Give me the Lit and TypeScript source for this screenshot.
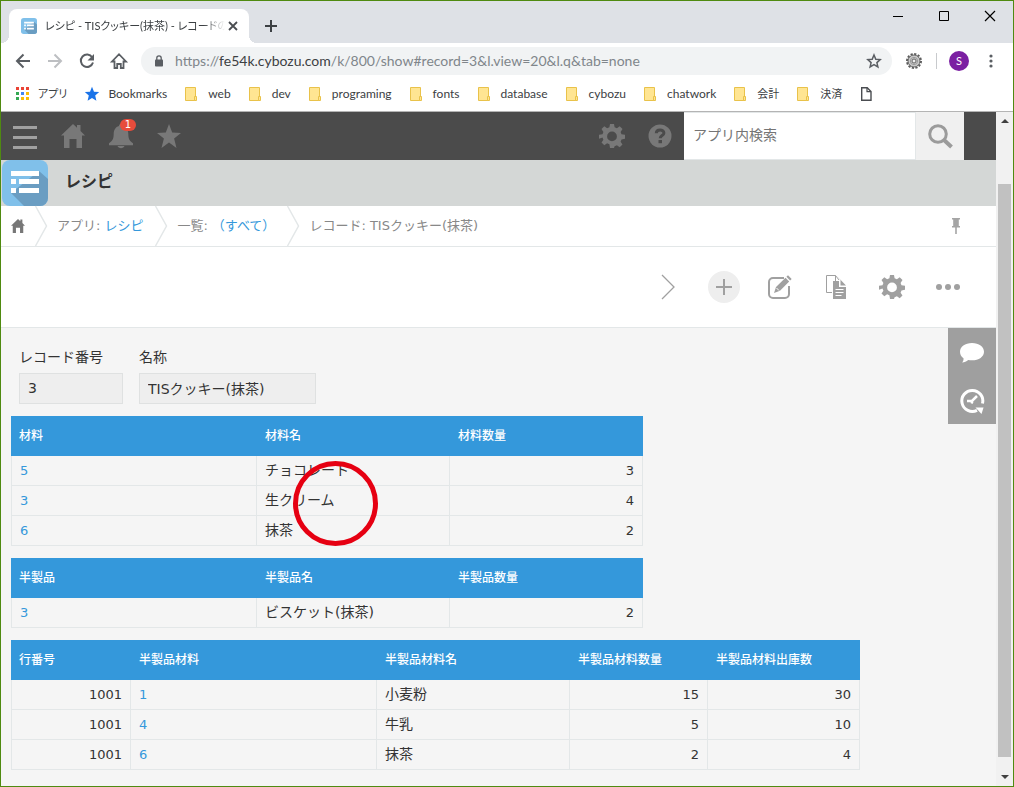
import { LitElement, html, css, svg, nothing } from "lit";
import { customElement, property } from "lit/decorators.js";

const GEAR =
  "M10 0h4l.6 3.3 2.3 1 2.8-2 2.8 2.8-1.9 2.8.9 2.3 3.5.6v4l-3.5.6-.9 2.3 1.9 2.8-2.8 2.8-2.8-2-2.3 1L14 24h-4l-.6-3.7-2.3-1-2.8 2-2.8-2.8 1.9-2.8-.9-2.3L-1 14.800v-4l3.500-.6.9-2.300L1.500 5.100l2.800-2.800 2.800 2 2.300-1z";

const ICONS: Record<string, unknown> = {
  appIcon: svg`<rect width="46" height="46" rx="8" fill="#80c0ea"/><path d="M37 11l9 8v19a8 8 0 0 1-8 8H22L9 33z" fill="#6a9dc2"/><path fill="#fff" d="M9 11h28v5H9zM9 19h5v5H9zM17 19h20v5H17zM9 28h5v5H9zM17 28h20v5H17z"/>`,
  close: svg`<path d="M2 2l8 8M10 2l-8 8" stroke="#4a4d51" stroke-width="1.800" fill="none"/>`,
  plus: svg`<path d="M6 0v12M0 6h12" stroke="#3c4043" stroke-width="2" fill="none"/>`,
  winMin: svg`<path d="M0 5.500h10" stroke="#000" fill="none"/>`,
  winMax: svg`<path d="M.5.5h9v9h-9z" stroke="#000" fill="none"/>`,
  winClose: svg`<path d="M0 0l10 10M10 0L0 10" stroke="#000" stroke-width="1.200" fill="none"/>`,
  back: svg`<path d="M15 8H2.500M8.500 1.500L2 8l6.500 6.500" stroke="#5a5e63" stroke-width="2" fill="none"/>`,
  forward: svg`<path d="M1 8h12.500M7.500 1.500L14 8l-6.500 6.500" stroke="#bdbfc2" stroke-width="2" fill="none"/>`,
  reload: svg`<path d="M13.200 4.200A6.200 6.200 0 1 0 14 9.500" stroke="#5a5e63" stroke-width="2" fill="none"/><path d="M15 1v6.500H8.500z" fill="#5a5e63"/>`,
  navHome: svg`<path d="M3.500 15V8.500H1L8 1.200 15 8.500h-2.500V15H9.800v-4H6.200v4z" stroke="#5a5e63" stroke-width="1.800" fill="none"/>`,
  lock: svg`<rect x="1" y="4.500" width="8" height="7" rx=".8" fill="#5a5e63"/><path d="M2.800 5V3a2.200 2.200 0 0 1 4.400 0v2" stroke="#5a5e63" stroke-width="1.300" fill="none"/>`,
  starOutline: svg`<path d="M7 1l1.800 4.200 4.400.4-3.300 3 1 4.400L7 10.700l-3.900 2.300 1-4.400-3.300-3 4.400-.4z" stroke="#5a5e63" stroke-width="1.500" fill="none"/>`,
  extension: svg`<circle cx="8" cy="8" r="7" fill="none" stroke="#5c5c5c" stroke-width="2" stroke-dasharray="2.200 1.460"/><circle cx="8" cy="8" r="6" fill="#c9c9c9" stroke="#666"/><circle cx="8" cy="8" r="3.600" fill="none" stroke="#999" stroke-width="1"/><circle cx="8" cy="8" r="2" fill="#eee" stroke="#666"/>`,
  kebab: svg`<circle cx="2" cy="2" r="1.600" fill="#5a5e63"/><circle cx="2" cy="7" r="1.600" fill="#5a5e63"/><circle cx="2" cy="12" r="1.600" fill="#5a5e63"/>`,
  apps: svg`<path fill="#ea4335" d="M2 1h3v3H2zM7 1h3v3H7zM12 1h3v3h-3z"/><path fill="#34a853" d="M2 6h3v3H2zM2 11h3v3H2z"/><path fill="#4285f4" d="M7 6h3v3H7z"/><path fill="#fbbc05" d="M12 6h3v3h-3zM7 11h3v3H7zM12 11h3v3h-3z"/>`,
  blueStar: svg`<path fill="#1a73e8" d="M8 .8l2 4.900 5.200.4-4 3.400 1.200 5.200L8 12l-4.400 2.700 1.200-5.200-4-3.400L6 5.700z"/>`,
  folder: svg`<path d="M1.500 1.500h10v13h-10z" fill="#ffe592" stroke="#e9c24a"/><path d="M10.500 10.500h2v4h-2z" fill="#ffe592" stroke="#e9c24a"/>`,
  file: svg`<path d="M2.700 1.700h5.500l3.800 3.800v8.800H2.700z" stroke="#4a4d51" stroke-width="1.400" fill="none"/><path d="M8 1.700v4h4" stroke="#4a4d51" stroke-width="1.200" fill="none"/>`,
  menu: svg`<path fill="#a0a0a0" d="M0 2h24v3H0zM0 12h24v3H0zM0 22h24v3H0z"/>`,
  house: svg`<path fill="currentColor" d="M12 0l4 3.700V1h3.500v6L24 11.500h-3V24h-5.500v-9h-7v9H3V11.500H0z"/>`,
  bell: svg`<path fill="currentColor" d="M12 0c1.300 0 2 .8 2 2 3.600 1 5.300 4 5.300 8 0 5.500 2 7.500 4.700 9.200v2H0v-2C2.700 17.500 4.700 15.500 4.700 10c0-4 1.700-7 5.300-8 0-1.200.7-2 2-2zM8.500 22h7c-.6 1.400-2 2.200-3.500 2.200S9.100 23.400 8.500 22z"/>`,
  star: svg`<path fill="currentColor" d="M12 0l3.200 8.500 8.800.4-6.900 5.700L19.500 24 12 18.500 4.500 24l2.400-9.400L0 8.900l8.800-.4z"/>`,
  gear: svg`<path fill="currentColor" fill-rule="evenodd" d="${GEAR}M12 7.500a4.900 4.900 0 1 0 0 9.800 4.900 4.900 0 0 0 0-9.800z"/>`,
  help: svg`<circle cx="12" cy="12" r="11.500" fill="currentColor"/><path d="M8.300 9.300c0-4.600 7.600-4.300 7.600-.4 0 2.700-3.700 2.600-3.700 5.400" stroke="#4b4b4b" stroke-width="3" fill="none"/><path fill="#4b4b4b" d="M10.500 16h3.500v3.200h-3.500z"/>`,
  search: svg`<circle cx="10" cy="10" r="8.300" stroke="#9b9b9b" stroke-width="3" fill="none"/><path d="M16 16l7.500 7" stroke="#9b9b9b" stroke-width="4" fill="none"/>`,
  chevron: svg`<path d="M.5 0l11 20-11 20" stroke="#e3e7e8" stroke-width="1.500" fill="none"/>`,
  pin: svg`<path fill="#a5a5a5" d="M0 0h8v1.500H6.800V8H8v1.500H4.800V16H3.200V9.500H0V8h1.200V1.500H0z"/>`,
  next: svg`<path d="M6 0l12 12L6 24" stroke="#a0a0a0" stroke-width="1.300" fill="none"/>`,
  add: svg`<circle cx="16" cy="16" r="16" fill="#eee"/><path d="M16 8v16M8 16h16" stroke="#a0a0a0" stroke-width="2" fill="none"/>`,
  edit: svg`<path d="M16 3H5a4 4 0 0 0-4 4v12a4 4 0 0 0 4 4h12a4 4 0 0 0 4-4v-8" stroke="#a0a0a0" stroke-width="2" fill="none"/><path fill="#a0a0a0" d="M6 18l2-6L17.500 2.700l3.700 3.700L12 15.800zM18.400 1.800L20 .3l3.700 3.700-1.600 1.500z"/><path d="M8.500 13l2.500 2.500" stroke="#fff" stroke-width="1"/>`,
  copy: svg`<path d="M8 17.500H2.500V.5h9L15 5" stroke="#a0a0a0" fill="none"/><path d="M11.500.5V6" stroke="#a0a0a0" fill="none"/><path fill="#a0a0a0" d="M9 6h6v6h7v12H9z"/><path fill="#a0a0a0" d="M12 0l10 10.500h-5.500V5z"/><path d="M11.500 14.500h8M11.500 17.500h8M11.500 20.500h6" stroke="#fff" fill="none"/>`,
  dots: svg`<circle cx="3" cy="3" r="3" fill="#a0a0a0"/><circle cx="12" cy="3" r="3" fill="#a0a0a0"/><circle cx="21" cy="3" r="3" fill="#a0a0a0"/>`,
  comment: svg`<path fill="#fff" d="M12 0c7 0 12 3.800 12 8.700s-5 8.600-12 8.600c-1.300 0-2.600-.1-3.800-.4C6.500 18.500 4.500 19.200 2.200 19.500c1-1.200 1.500-2.600 1.300-4.200C1.300 13.700 0 11.400 0 8.700 0 3.800 5 0 12 0z"/>`,
  history: svg`<path d="M17 21.300A10.500 10.500 0 1 1 22.500 14.500" stroke="#fff" stroke-width="3" fill="none"/><path fill="#fff" d="M15.500 18.500h8L21.500 25z"/><path d="M7 12h5l5-5M11 13l2 1" stroke="#fff" stroke-width="2.500" fill="none"/>`,
  up: svg`<path fill="#404040" d="M0 5l4-4 4 4z"/>`,
  down: svg`<path fill="#404040" d="M0 0l4 4 4-4z"/>`,
};

const icon = (name: string, w: number, h: number, box?: string) =>
  svg`<svg width=${w} height=${h} viewBox=${box ?? `0 0 ${w} ${h}`} overflow="visible" aria-hidden="true">${ICONS[name]}</svg>`;

const base = css`
  *, *::before, *::after { box-sizing: border-box; }
  svg { display: block; flex: none; }
  button {
    display: flex; align-items: center; justify-content: center;
    margin: 0; padding: 0; border: 0; background: none; color: inherit; font: inherit;
  }
  a { color: inherit; text-decoration: none; }
`;

@customElement("browser-chrome")
export class BrowserChrome extends LitElement {
  static styles = [base, css`
    :host { display: block; font-family: Lato, "Noto Sans CJK JP", sans-serif; font-size: 12px; color: #3c4043; border-bottom: 1px solid #b4b4b4; }
    .strip { display: flex; align-items: flex-end; height: 42px; padding-left: 8px; background: #dee1e6; }
    .tab { position: relative; display: flex; align-items: center; width: 240px; height: 34px; padding: 0 8px 0 12px; background: #fff; border-radius: 8px 8px 0 0; }
    .tab::before, .tab::after { content: ""; position: absolute; bottom: 0; width: 8px; height: 8px; }
    .tab::before { left: -8px; background: radial-gradient(circle at 0 0, #dee1e6 8px, #fff 8px); }
    .tab::after { right: -8px; background: radial-gradient(circle at 100% 0, #dee1e6 8px, #fff 8px); }
    .title { flex: 1; min-width: 0; margin-left: 8px; font-size: 11px; white-space: nowrap; font-feature-settings: "palt"; mask-image: linear-gradient(to right, #000 88%, transparent); }
    .close { width: 16px; height: 16px; }
    .new { width: 28px; height: 34px; margin-left: 8px; }
    .controls { display: flex; align-self: flex-start; margin-left: auto; }
    .controls button { width: 46px; height: 29px; }
    .nav { display: flex; align-items: center; height: 36px; padding: 0 6px; }
    .nav > button { width: 32px; height: 32px; }
    .address { display: flex; align-items: center; flex: 1; height: 28px; margin: 0 6px; padding: 0 11px 0 13px; border-radius: 14px; background: #f1f3f4; }
    .url { flex: 1; margin-left: 11px; font-size: 14px; color: #80868b; white-space: nowrap; }
    .host { color: #3c4043; }
    .rule { width: 1px; height: 16px; margin: 0 6px; background: #c8cacd; }
    .avatar { width: 20px; height: 20px; border-radius: 50%; background: #7b1fa2; color: #fff; font-size: 11px; line-height: 20px; }
    .bookmarks { display: flex; align-items: center; gap: 17px; height: 32px; padding: 0 0 3px 13px; white-space: nowrap; }
    .bookmark { display: flex; align-items: center; gap: 8px; font-feature-settings: "palt"; }
    .bookmark:lang(ja) { font-size: 11px; }
  `];

  private bookmarks: { icon: string; text: string; lang: string }[] = [
    { icon: "apps", text: "アプリ", lang: "ja" },
    { icon: "blueStar", text: "Bookmarks", lang: "en" },
    ...["web", "dev", "programing", "fonts", "database", "cybozu", "chatwork"].map((text) => ({ icon: "folder", text, lang: "en" })),
    { icon: "folder", text: "会計", lang: "ja" },
    { icon: "folder", text: "決済", lang: "ja" },
    { icon: "file", text: "", lang: "ja" },
  ];

  render() {
    return html`
      <div class="strip">
        <div class="tab">
          ${icon("appIcon", 16, 16, "0 0 46 46")}
          <span class="title">レシピ - TISクッキー(抹茶) - レコードの</span>
          <button class="close" aria-label="タブを閉じる">${icon("close", 12, 12)}</button>
        </div>
        <button class="new" aria-label="新しいタブ">${icon("plus", 12, 12)}</button>
        <div class="controls">
          <button aria-label="最小化">${icon("winMin", 10, 10)}</button>
          <button aria-label="最大化">${icon("winMax", 10, 10)}</button>
          <button aria-label="閉じる">${icon("winClose", 10, 10)}</button>
        </div>
      </div>
      <nav class="nav">
        <button aria-label="戻る">${icon("back", 16, 16)}</button>
        <button aria-label="進む">${icon("forward", 16, 16)}</button>
        <button aria-label="再読み込み">${icon("reload", 16, 16)}</button>
        <button aria-label="ホーム">${icon("navHome", 16, 16)}</button>
        <div class="address">
          ${icon("lock", 10, 12)}
          <span class="url">https://<span class="host">fe54k.cybozu.com</span>/k/800/show#record=3&amp;l.view=20&amp;l.q&amp;tab=none</span>
          <button aria-label="ブックマークに追加">${icon("starOutline", 14, 14)}</button>
        </div>
        <button aria-label="拡張機能">${icon("extension", 16, 16)}</button>
        <span class="rule"></span>
        <button aria-label="プロフィール"><span class="avatar">S</span></button>
        <button aria-label="メニュー">${icon("kebab", 4, 14)}</button>
      </nav>
      <nav class="bookmarks">
        ${this.bookmarks.map((b) => html`<a class="bookmark" href="#" lang=${b.lang} aria-label=${b.text || "ページ"}>${icon(b.icon, 16, 16)}${b.text || nothing}</a>`)}
      </nav>`;
  }
}

type Column = { label: string; width: number; kind?: "link" | "number" };

@customElement("record-table")
export class RecordTable extends LitElement {
  @property({ attribute: false }) columns: Column[] = [];
  @property({ attribute: false }) rows: string[][] = [];

  static styles = [base, css`
    :host { display: block; }
    .table { border-collapse: separate; border-spacing: 0; table-layout: fixed; }
    .head { height: 40px; padding: 0 8px; background: #3498db; color: #fff; font-size: 12px; font-weight: 500; text-align: left; }
    .cell { height: 30px; padding: 0 8px 2px; border: solid #e3e7e8; border-width: 0 1px 1px 0; font-size: 14px; line-height: 20px; }
    .cell:first-child { border-left-width: 1px; }
    .number { text-align: right; }
    .number, .link { padding-bottom: 0; font-size: 13px; }
    .link a { color: #3498db; }
  `];

  render() {
    return html`
      <table class="table" style="width:${this.columns.reduce((sum, c) => sum + c.width, 0)}px">
        <colgroup>${this.columns.map((c) => html`<col style="width:${c.width}px">`)}</colgroup>
        <thead><tr>${this.columns.map((c) => html`<th class="head" scope="col">${c.label}</th>`)}</tr></thead>
        <tbody>
          ${this.rows.map((row) => html`<tr>${row.map((value, i) => {
            const kind = this.columns[i].kind;
            return html`<td class="cell ${kind ?? ""}">${kind === "link" ? html`<a href="#">${value}</a>` : value}</td>`;
          })}</tr>`)}
        </tbody>
      </table>`;
  }
}

@customElement("app-root")
export class AppRoot extends LitElement {
  static styles = [base, css`
    :host {
      display: flex; flex-direction: column; box-sizing: border-box; position: relative;
      min-height: 100vh; border: 1px solid #4f8a10; background: #fff; color: #333;
      font-family: "DejaVu Sans", "Noto Sans CJK JP", sans-serif; font-size: 14px; line-height: 20px;
    }
    .view { display: flex; flex: 1; }
    .page { display: flex; flex-direction: column; flex: 1; min-width: 0; }
    .scroll { display: flex; flex-direction: column; align-items: center; width: 17px; background: #f1f1f1; }
    .scroll button { width: 17px; height: 17px; }
    .before { flex: 55; }
    .thumb { flex: 574; width: 13px; background: #c1c1c1; }
    .after { flex: 12; }

    .global { display: flex; height: 48px; background: #4b4b4b; color: #787878; }
    .global button { position: relative; width: 48px; height: 48px; }
    .badge { position: absolute; top: 7px; right: 9px; width: 16px; height: 12px; border-radius: 6px; background: #e74c3c; color: #fff; font-size: 10px; line-height: 12px; text-align: center; }
    .search { display: flex; width: 280px; margin: 0 32px 0 0; }
    .tools { display: flex; margin-left: auto; }
    .query { flex: 1; min-width: 0; height: 48px; padding: 0 9px 2px; border: 1px solid #e3e7e8; border-left-width: 0; background: #fff; font: inherit; color: #333; }
    .query::placeholder { color: #757575; opacity: 1; }
    .search button { background: #f0f0f0; }

    .app { display: flex; align-items: center; height: 46px; gap: 16px; background: #d4d7d6; }
    .name { margin: 0; padding-bottom: 2px; font-size: 16px; line-height: 24px; font-weight: 700; }

    .crumbs { display: flex; align-items: center; height: 41px; border-bottom: 1px solid #e3e7e8; font-size: 13px; color: #888; white-space: nowrap; }
    .crumb { display: flex; align-items: center; gap: 4px; padding: 0 12px 0 10px; }
    .crumb a { color: #3498db; }
    .crumbs .root { padding: 0 10px; color: #777; }
    .crumbs .pin { margin-left: auto; padding: 0 36px; }

    .actions { display: flex; align-items: center; justify-content: flex-end; height: 81px; padding-right: 20px; border-bottom: 1px solid #e3e7e8; color: #a0a0a0; }
    .actions button { width: 56px; height: 56px; }

    .record { display: flex; flex: 1; align-items: flex-start; background: #f5f5f5; }
    .content { display: flex; flex-direction: column; flex: 1; gap: 12px; min-width: 0; padding: 19px 10px 16px; }
    .fields { display: flex; gap: 16px; padding-left: 8px; }
    .field { display: flex; flex-direction: column; gap: 6px; }
    .value { height: 31px; padding: 0 8px 2px; border: 1px solid #dfe1e1; background: #eee; font: inherit; color: #333; }
    .short { width: 104px; }
    .long { width: 177px; }
    .side { display: flex; flex-direction: column; background: #9f9f9f; }
    .side button { width: 48px; height: 48px; padding-top: 2px; }
    .ring { position: absolute; left: 292px; top: 460px; width: 85px; height: 85px; border: 5px solid #e60012; border-radius: 50%; pointer-events: none; }
  `];

  private materials: Column[] = [
    { label: "材料", width: 246, kind: "link" },
    { label: "材料名", width: 193 },
    { label: "材料数量", width: 193, kind: "number" },
  ];
  private semis: Column[] = [
    { label: "半製品", width: 246, kind: "link" },
    { label: "半製品名", width: 193 },
    { label: "半製品数量", width: 193, kind: "number" },
  ];
  private semiMaterials: Column[] = [
    { label: "行番号", width: 120, kind: "number" },
    { label: "半製品材料", width: 246, kind: "link" },
    { label: "半製品材料名", width: 193 },
    { label: "半製品材料数量", width: 138, kind: "number" },
    { label: "半製品材料出庫数", width: 152, kind: "number" },
  ];

  render() {
    return html`
      <browser-chrome></browser-chrome>
      <div class="view">
        <div class="page">
          <header class="global">
            <button aria-label="メニュー">${icon("menu", 24, 24)}</button>
            <button aria-label="ポータル">${icon("house", 24, 24)}</button>
            <button aria-label="通知">${icon("bell", 24, 24)}<span class="badge">1</span></button>
            <button aria-label="ブックマーク">${icon("star", 24, 24)}</button>
            <div class="tools">
              <button aria-label="設定">${icon("gear", 24, 24)}</button>
              <button aria-label="ヘルプ">${icon("help", 24, 24)}</button>
              <form class="search">
                <input class="query" type="text" placeholder="アプリ内検索" aria-label="アプリ内検索">
                <button type="button" aria-label="検索">${icon("search", 24, 24)}</button>
              </form>
            </div>
          </header>
          <div class="app">
            ${icon("appIcon", 48, 46, "0 0 46 46")}
            <h1 class="name">レシピ</h1>
          </div>
          <nav class="crumbs">
            <a class="root" href="#" aria-label="ポータル">${icon("house", 14, 14, "0 0 24 24")}</a>
            ${icon("chevron", 12, 40)}
            <span class="crumb">アプリ: <a href="#">レシピ</a></span>
            ${icon("chevron", 12, 40)}
            <span class="crumb">一覧: <a href="#">（すべて）</a></span>
            ${icon("chevron", 12, 40)}
            <span class="crumb">レコード: TISクッキー(抹茶)</span>
            <button class="pin" aria-label="固定">${icon("pin", 8, 16)}</button>
          </nav>
          <div class="actions">
            <button aria-label="次のレコード">${icon("next", 24, 24)}</button>
            <button aria-label="レコードを追加する">${icon("add", 32, 32)}</button>
            <button aria-label="レコードを編集する">${icon("edit", 24, 24)}</button>
            <button aria-label="レコードを再利用する">${icon("copy", 24, 24)}</button>
            <button aria-label="アプリを設定する">${icon("gear", 24, 24)}</button>
            <button aria-label="オプション">${icon("dots", 24, 6)}</button>
          </div>
          <main class="record">
            <div class="content">
              <div class="fields">
                <div class="field"><label for="number">レコード番号</label><input id="number" class="value short" readonly .value=${"3"}></div>
                <div class="field"><label for="name">名称</label><input id="name" class="value long" readonly .value=${"TISクッキー(抹茶)"}></div>
              </div>
              <record-table .columns=${this.materials} .rows=${[["5", "チョコレート", "3"], ["3", "生クリーム", "4"], ["6", "抹茶", "2"]]}></record-table>
              <record-table .columns=${this.semis} .rows=${[["3", "ビスケット(抹茶)", "2"]]}></record-table>
              <record-table .columns=${this.semiMaterials} .rows=${[["1001", "1", "小麦粉", "15", "30"], ["1001", "4", "牛乳", "5", "10"], ["1001", "6", "抹茶", "2", "4"]]}></record-table>
            </div>
            <aside class="side">
              <button aria-label="コメント">${icon("comment", 24, 20)}</button>
              <button aria-label="変更履歴">${icon("history", 24, 24)}</button>
            </aside>
          </main>
        </div>
        <div class="scroll">
          <button aria-label="上へ">${icon("up", 8, 5)}</button>
          <span class="before"></span><span class="thumb"></span><span class="after"></span>
          <button aria-label="下へ">${icon("down", 8, 5)}</button>
        </div>
      </div>
      <div class="ring"></div>`;
  }
}
